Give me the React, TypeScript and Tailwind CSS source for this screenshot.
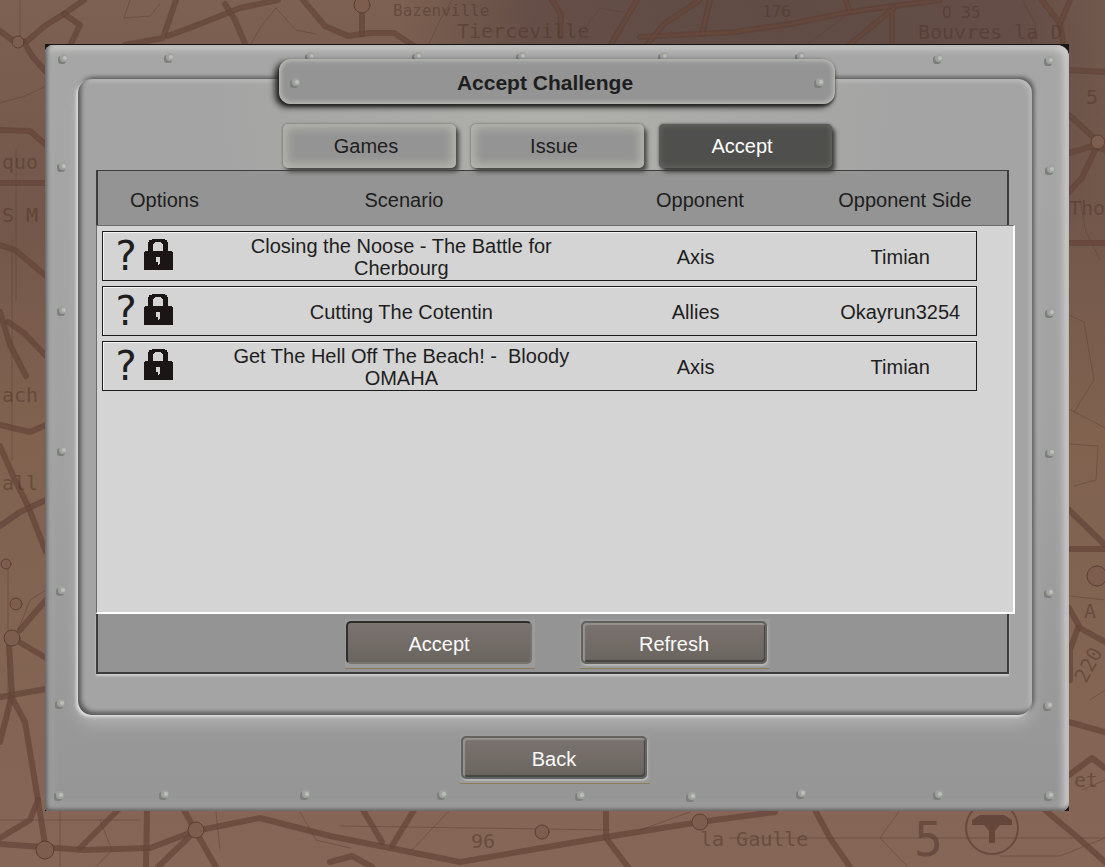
import { useState } from 'react';
import clsx from 'clsx';

type Challenge = {
  id: number;
  scenario: string;
  opponent: string;
  side: string;
};

const challenges: Challenge[] = [
  { id: 1, scenario: 'Closing the Noose - The Battle for Cherbourg', opponent: 'Axis', side: 'Timian' },
  { id: 2, scenario: 'Cutting The Cotentin', opponent: 'Allies', side: 'Okayrun3254' },
  { id: 3, scenario: 'Get The Hell Off The Beach! -  Bloody OMAHA', opponent: 'Axis', side: 'Timian' },
];

const tabs = ['Games', 'Issue', 'Accept'];

// rivet centres on a 1024 x 767 plate, turned into percentages when drawn
const rivets = [
  [18, 15], [124, 14], [265, 13], [372, 13], [476, 13], [618, 13], [755, 13], [893, 15], [1004, 17],
  [17, 123], [17, 267], [17, 407], [16, 547], [15, 660],
  [1005, 126], [1005, 269], [1005, 409], [1004, 549], [1003, 662],
  [14, 752], [119, 751], [260, 751], [397, 751], [535, 752], [646, 753], [756, 750], [893, 751], [1004, 752],
];

const thickRoads = [
  'M0 31L12 40L26 42L46 25L64 14L84 0', 'M64 14L80 25L70 46', 'M24 42L32 56L46 72',
  'M0 130L30 131L46 145', 'M0 183H46', 'M168 36L205 22L240 8L278 0', 'M225 4L235 20L246 46',
  'M303 0L325 26L348 36L370 33H394L414 46', 'M362 10V34', 'M176 0L163 38L125 45',
  'M552 0L561 14L560 36', 'M637 0L610 46', 'M700 0L664 24L646 46', 'M640 37L735 32L790 24L850 12L894 6L940 0',
  'M710 0L702 34', 'M894 8L848 46', 'M892 12V46', 'M846 0L850 12', 'M1042 0L1060 24L1070 0', 'M1060 24L1063 42',
  'M1069 70L1105 72', 'M1069 115L1093 137', 'M1069 153L1093 146L1105 150', 'M1096 148L1082 178L1069 192',
  'M1069 243H1105', 'M1069 510L1105 545', 'M1069 549H1105', 'M1069 608L1080 628L1105 642', 'M1078 628L1070 650V680',
  'M1069 722L1105 732', 'M1069 775L1092 758L1105 768', 'M0 245L15 250L46 276', 'M0 312L10 345L26 376',
  'M8 322L24 333L46 356', 'M0 425L30 432L46 425', 'M0 446L14 478L28 506L46 552', 'M0 526L20 512L46 500',
  'M46 600L20 630', 'M16 640L46 658', 'M9 645L12 695L0 742', 'M12 698L25 722L35 782L46 850',
  'M0 697L46 689', 'M0 844L84 850L150 848L195 831L260 818L330 836L400 850L460 862L530 850L600 838L700 822L775 812',
  'M0 838L30 820L38 800', 'M80 848L118 810', 'M147 810L146 867', 'M184 810L196 832L216 867', 'M158 867L190 836',
  'M363 810L382 842', 'M414 810L392 846', 'M606 810V838L628 867', 'M815 810L830 838L850 867',
  'M1045 810L1076 836L1105 862', 'M330 862L352 856L372 867',
];

const thinRoads = [
  'M130 0L124 18L150 16L160 4', 'M250 46L260 28L276 8', 'M276 8L296 30L316 34', 'M428 46L440 20L452 0',
  'M576 46L590 20L600 8L622 12', 'M20 0V46', 'M16 150V300', 'M0 103L25 96L46 86', 'M12 240V460', 'M8 560V720',
  'M14 640L30 600L46 590', 'M850 12L820 35L804 46', 'M1022 0L1036 24L1030 46', 'M1080 200L1086 232L1100 260',
  'M1069 315L1084 322L1094 380L1074 412', 'M1069 409L1105 428', 'M1069 444L1098 446L1096 480L1074 486',
  'M60 810V867', 'M100 820L112 850L96 867', 'M0 820H140', 'M216 812L220 850', 'M300 812L316 840L350 848',
  'M450 810L412 850', 'M340 826L610 830', 'M640 830L690 812', 'M730 838H1105', 'M900 810L880 838L908 867',
  'M1000 856H1060L1105 838', 'M1069 596L1105 600', 'M1090 700L1105 690', 'M1082 790L1105 780',
];

function MapBackground() {
  return (
    <svg
      className="absolute inset-0 -z-10 h-full w-full"
      viewBox="0 0 1105 867"
      preserveAspectRatio="none"
      aria-hidden="true"
    >
      <defs>
        <linearGradient id="land" x1="0" y1="0" x2="0" y2="1">
          <stop offset="0" stopColor="#7d6152" />
          <stop offset="0.25" stopColor="#72574a" />
          <stop offset="0.5" stopColor="#80624f" />
          <stop offset="1" stopColor="#856657" />
        </linearGradient>
        <radialGradient id="shade" gradientUnits="userSpaceOnUse" cx="780" cy="0" r="380">
          <stop offset="0" stopColor="#604b45" />
          <stop offset="0.65" stopColor="#604b45" stopOpacity="0.85" />
          <stop offset="1" stopColor="#604b45" stopOpacity="0" />
        </radialGradient>
      </defs>
      <rect width="1105" height="867" fill="url(#land)" />
      <rect width="1105" height="867" fill="url(#shade)" />
      <g fill="none" stroke="#5c3f34" strokeLinejoin="round" strokeLinecap="round">
        <g strokeWidth="1" strokeOpacity="0.45">
          {thinRoads.map((d) => <path key={d} d={d} />)}
        </g>
        <g strokeWidth="6" strokeOpacity="0.6">
          {thickRoads.map((d) => <path key={d} d={d} />)}
        </g>
        <g stroke="#744c3e" strokeWidth="3" strokeOpacity="0.35">
          {thickRoads.map((d) => <path key={d} d={d} />)}
        </g>
        <g strokeWidth="1" fill="#7c5d4e">
          <circle cx="18" cy="42" r="6" />
          <circle cx="362" cy="5" r="8" />
          <circle cx="1098" cy="142" r="7" />
          <circle cx="1097" cy="576" r="10" />
          <circle cx="12" cy="638" r="8" />
          <circle cx="16" cy="604" r="6" />
          <circle cx="45" cy="850" r="9" />
          <circle cx="196" cy="830" r="8" />
          <circle cx="542" cy="832" r="7" />
          <circle cx="700" cy="822" r="8" />
          <circle cx="6" cy="564" r="5" />
        </g>
        <circle cx="992" cy="828" r="26" strokeWidth="2" strokeOpacity="0.7" />
      </g>
      <path d="M972 820L980 815H1004L1012 820V825H1000L995 831V843H989V831L984 825H972Z" fill="#65463a" />
      <g fill="#4d342b" fillOpacity="0.5" fontFamily="'DejaVu Sans Mono', monospace" fontSize="20">
        <text x="393" y="16" fontSize="16">Bazenville</text>
        <text x="457" y="38">Tierceville</text>
        <text x="762" y="17" fontSize="16">176</text>
        <text x="942" y="18" fontSize="16">O 35</text>
        <text x="918" y="39">Bouvres la D</text>
        <text x="1086" y="104">5</text>
        <text x="1069" y="215">Tho</text>
        <text x="2" y="169">quo</text>
        <text x="2" y="222">S M</text>
        <text x="2" y="402">ach</text>
        <text x="2" y="490">all</text>
        <text x="471" y="848">96</text>
        <text x="700" y="846">la Gaulle</text>
        <text x="1074" y="787">et</text>
        <text x="1084" y="618">A</text>
        <text x="1086" y="684" transform="rotate(-62 1086 684)">220</text>
        <text x="914" y="856" fontSize="48">5</text>
      </g>
    </svg>
  );
}

function Rivet() {
  return (
    <svg className="block size-3" viewBox="0 0 12 12" aria-hidden="true">
      <rect x="1" y="3" width="8" height="8" rx="3" fill="#7d7f7b" />
      <circle cx="7" cy="5" r="4" fill="#a0a29d" />
      <circle cx="8" cy="5" r="2" fill="#bcbeb7" />
    </svg>
  );
}

function LockIcon() {
  return (
    <svg className="mb-1 h-[31px] w-[29px]" viewBox="0 0 29 31" shapeRendering="crispEdges" role="img" aria-label="Locked">
      <path
        fillRule="evenodd"
        fill="#1b1516"
        d="M8 0H21V1H23V3H24V12H28V13H29V31H0V13H1V12H4V3H5V1H8ZM11 3V4H10V5H9V12H19V5H18V4H17V3ZM12 18V23H14V26H15V25H16V18Z"
      />
    </svg>
  );
}

function PlateButton({ label, pressed = false }: { label: string; pressed?: boolean }) {
  return (
    <button
      type="button"
      className="h-[50px] w-[190px] border-b border-[#8d7c58] bg-[#9b9b9b] pt-[2px] pr-[3px] pb-1 pl-px text-[#fafafa]"
    >
      <span
        className={clsx(
          'flex h-full items-center justify-center rounded-[5px] border-2 bg-linear-to-b from-[#7a736f] to-[#6b6560] pt-[2px]',
          pressed
            ? 'border-t-[#2e2e2d] border-r-[#77736f] border-b-[#77736f] border-l-[#2e2e2d]'
            : 'border-[#626260] shadow-[inset_2px_2px_1px_#96938f,inset_-1px_-2px_1px_#464441,1px_2px_1px_#b5b5b5]'
        )}
      >
        {label}
      </span>
    </button>
  );
}

function ChallengeTable() {
  return (
    <table className="flex min-h-[300px] flex-1 flex-col">
      <thead className="block border-x-2 border-t border-[#3c3c3c] bg-[#949494]">
        <tr className="mr-[26px] ml-[6px] grid h-[54px] grid-cols-[113fr_374fr_218fr_172fr] items-center pt-1">
          <th scope="col" className="pl-2 font-normal">Options</th>
          <th scope="col" className="font-normal">Scenario</th>
          <th scope="col" className="font-normal">Opponent</th>
          <th scope="col" className="pl-5 font-normal whitespace-nowrap">Opponent Side</th>
        </tr>
      </thead>
      <tbody className="-mr-[6px] flex flex-1 flex-col gap-[5px] border-t border-r-2 border-b-2 border-l border-t-[#6b6b6b] border-r-white border-b-white border-l-[#6b6b6b] bg-[#d4d4d4] py-[5px] pr-9 pl-[5px]">
        {challenges.map((c) => (
          <tr
            key={c.id}
            className="grid h-[50px] grid-cols-[113fr_372fr_218fr_172fr] items-center border border-[#1c1c1c] text-center leading-[22px] shadow-[inset_1px_1px_0_#f4f4f4]"
          >
            <td className="flex items-center gap-[7px] pl-3">
              <span className="w-[22px] font-['DejaVu_Sans',sans-serif] text-[40px] leading-[48px]">?</span>
              <LockIcon />
            </td>
            <td className="pt-[2px] whitespace-pre-wrap">{c.scenario}</td>
            <td className="pt-[2px]">{c.opponent}</td>
            <td className="pt-[2px] pl-5">{c.side}</td>
          </tr>
        ))}
      </tbody>
    </table>
  );
}

export default function App() {
  const [activeTab, setActiveTab] = useState('Accept');

  return (
    <main className="relative isolate flex min-h-screen pt-11 pr-9 pb-14 pl-[45px] font-['Liberation_Sans',Arial,sans-serif] text-[20px] leading-[22px] text-[#1e1e1e]">
      <MapBackground />

      <div className="relative flex flex-1 bg-[#161616] pt-px">
        <div className="flex flex-1 flex-col items-center rounded-tl-lg rounded-tr-xl rounded-br-lg rounded-bl-sm bg-linear-to-b from-[#a6a6a6] via-[#a2a2a2] to-[#959595] pt-[34px] pr-[37px] pb-[27px] pl-[33px] shadow-[inset_2px_-2px_4px_#585858,inset_-4px_3px_8px_#d4d4d2,inset_0_0_16px_#b0b0b0]">
          <section className="flex w-full flex-1 flex-col rounded-[14px] bg-[#a4a4a4] bg-radial-[at_50%_0%] from-[#b0b1ac] to-[#a4a4a4] to-50% pb-[41px] shadow-[inset_3px_-3px_4px_#585858,inset_-2px_2px_5px_#c0c0c0,-2px_2px_3px_#dedede,2px_-2px_4px_#555555,0_8px_16px_#b4b4b4]">
            <div className="z-10 -mt-5 flex flex-col items-center gap-5 pl-1">
              <div className="flex h-[45px] w-[556px] items-center justify-between rounded-xl bg-[#949494] px-[10px] pt-[2px] shadow-[inset_0_0_4px_2px_#b9bbb3,-4px_3px_6px_#20201e,0_2px_3px_#3a3a36]">
                <Rivet />
                <h1 className="pr-6 text-[21px] leading-6 font-bold">Accept Challenge</h1>
                <Rivet />
              </div>

              <div role="tablist" className="flex gap-[15px]">
                {tabs.map((tab) => (
                  <button
                    key={tab}
                    type="button"
                    role="tab"
                    aria-selected={activeTab === tab}
                    onClick={() => setActiveTab(tab)}
                    className={clsx(
                      'h-11 w-[173px] rounded-[5px] pr-1.5',
                      activeTab === tab
                        ? 'bg-[#4f4f4d] text-white shadow-[inset_0_0_5px_2px_#62625f,3px_4px_4px_#3c3c3a,0_0_3px_#555555]'
                        : 'bg-[#949494] shadow-[inset_0_0_10px_4px_#b4b6ac,3px_4px_4px_#484846,0_0_3px_#666666]'
                    )}
                  >
                    {tab}
                  </button>
                ))}
              </div>
            </div>

            <div className="mt-[2px] mr-[23px] ml-[18px] flex flex-1 flex-col">
              <ChallengeTable />
              <div className="flex h-[60px] justify-center gap-[45px] border-x-2 border-b-2 border-[#3c3c3c] bg-[#949494] pt-[5px] pl-[10px] shadow-[0_2px_2px_#d0d0d0]">
                <PlateButton label="Accept" pressed />
                <PlateButton label="Refresh" />
              </div>
            </div>
          </section>

          <div className="mt-[19px]">
            <PlateButton label="Back" />
          </div>
        </div>

        {rivets.map(([x, y]) => (
          <span
            key={`${x}-${y}`}
            className="absolute -mt-1.5 -ml-1.5"
            style={{ left: `${(x / 1024) * 100}%`, top: `${(y / 767) * 100}%` }}
          >
            <Rivet />
          </span>
        ))}
      </div>
    </main>
  );
}
